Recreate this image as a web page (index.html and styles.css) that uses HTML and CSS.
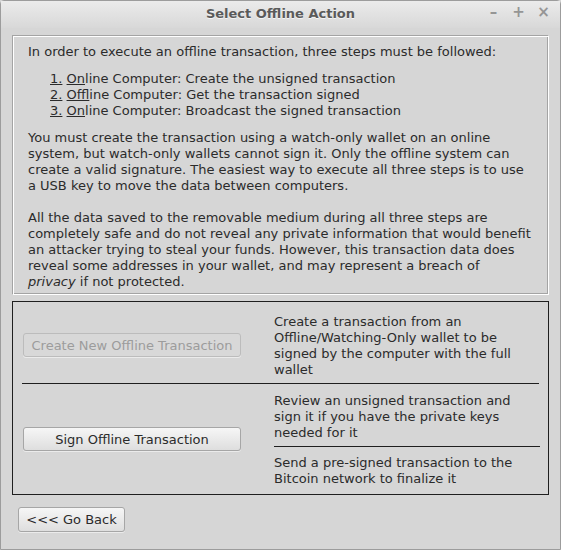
FILE: index.html
```html
<!DOCTYPE html>
<html>
<head>
<meta charset="utf-8">
<link rel="stylesheet" href="styles.css">
</head>
<body>
<div class="window">
  <div class="titlebar">
    <div class="title">Select Offline Action</div>
    <div class="controls"><span class="ctl">&#8211;</span><span class="ctl">+</span><span class="ctl">&#215;</span></div>
  </div>
  <div class="content">
    <div class="info">
      <p class="intro">In order to execute an offline transaction, three steps must be followed:</p>
      <ol class="steps">
        <li><span class="num">1.</span> <u>On</u>line Computer: Create the unsigned transaction</li>
        <li><span class="num">2.</span> <u>Off</u>line Computer: Get the transaction signed</li>
        <li><span class="num">3.</span> <u>On</u>line Computer: Broadcast the signed transaction</li>
      </ol>
      <p>You must create the transaction using a watch-only wallet on an online<br>system, but watch-only wallets cannot sign it. Only the offline system can<br>create a valid signature. The easiest way to execute all three steps is to use<br>a USB key to move the data between computers.</p>
      <p>All the data saved to the removable medium during all three steps are<br>completely safe and do not reveal any private information that would benefit<br>an attacker trying to steal your funds. However, this transaction data does<br>reveal some addresses in your wallet, and may represent a breach of<br><i>privacy</i> if not protected.</p>
    </div>
    <div class="actions">
      <div class="row first">
        <div class="btncell"><button class="btn disabled" disabled>Create New Offline Transaction</button></div>
        <div class="desc">Create a transaction from an Offline/Watching-Only wallet to be signed by the computer with the full wallet</div>
      </div>
      <div class="row second">
        <div class="btncell"><button class="btn">Sign Offline Transaction</button></div>
        <div class="descs">
          <div class="desc">Review an unsigned transaction and sign it if you have the private keys needed for it</div>
          <div class="desc sep">Send a pre-signed transaction to the Bitcoin network to finalize it</div>
        </div>
      </div>
    </div>
    <div class="footer">
      <button class="btn back">&lt;&lt;&lt; Go Back</button>
    </div>
  </div>
</div>
</body>
</html>
```

FILE: styles.css
```css
html, body {
  margin: 0;
  padding: 0;
  background: #d6d6d6;
}
body {
  font-family: "DejaVu Sans", "Liberation Sans", sans-serif;
  font-size: 13px;
  line-height: 16px;
  color: #2b2b2b;
}
.window {
  width: 561px;
  height: 550px;
  box-sizing: border-box;
  border: 1px solid #9c9c9c;
  border-radius: 4px 4px 0 0;
  background: #d6d6d6;
  display: flex;
  flex-direction: column;
}
.titlebar {
  height: 27px;
  display: flex;
  align-items: center;
  justify-content: center;
  background: linear-gradient(#ebebeb, #d8d8d8);
  position: relative;
}
.title {
  font-weight: bold;
  font-size: 13px;
  color: #5a5a5a;
  text-shadow: 0 1px 0 #f4f4f4;
  margin-top: -2px;
}
.controls {
  position: absolute;
  right: 9px;
  top: 3px;
  display: flex;
  gap: 10px;
  color: #959595;
  font-size: 15px;
  font-weight: bold;
}
.ctl {
  width: 15px;
  text-align: center;
}
.content {
  padding: 7px 11px 0 11px;
  display: flex;
  flex-direction: column;
}
.info {
  border: 1px solid;
  border-color: #a4a4a4 #ffffff #ffffff #a4a4a4;
  box-shadow: inset 1px 1px 0 #ffffff, inset -1px -1px 0 #a4a4a4;
  height: 260px;
  box-sizing: border-box;
  padding: 8px 6px 0 15px;
}
.info p {
  margin: 0 0 16px 0;
}
.info p.intro {
  margin-bottom: 11px;
}
.steps {
  list-style: none;
  margin: 0 0 11px 0;
  padding: 0 0 0 22px;
}
.num {
  text-decoration: underline;
}
.actions {
  margin-top: 6px;
  border: 1px solid #1f1f1f;
  height: 194px;
  box-sizing: border-box;
  padding: 12px 9px 0 9px;
}
.row {
  display: flex;
}
.row.first {
  border-bottom: 1px solid #1f1f1f;
  padding-bottom: 5px;
}
.row.second {
  padding-top: 9px;
}
.btncell {
  width: 218px;
  margin-left: 1px;
  margin-right: 33px;
  display: flex;
  align-items: center;
}
.btncell .btn {
  margin-top: -2px;
}
.desc {
  width: 266px;
}
.descs {
  display: flex;
  flex-direction: column;
}
.desc.sep {
  border-top: 1px solid #1f1f1f;
  margin-top: 5px;
  padding-top: 8px;
}
.btn {
  font-family: inherit;
  font-size: 13px;
  color: #2b2b2b;
  height: 24px;
  width: 218px;
  border: 1px solid #a6a6a6;
  border-radius: 3px;
  background: linear-gradient(#f6f6f6, #dedede);
  box-shadow: 0 1px 0 rgba(255,255,255,0.5);
  padding: 0;
}
.btn.disabled {
  color: #9c9c9c;
  background: #d8d8d8;
  border-color: #bcbcbc;
}
.footer {
  padding: 12px 0 0 6px;
}
.btn.back {
  width: 107px;
  height: 25px;
}
```
